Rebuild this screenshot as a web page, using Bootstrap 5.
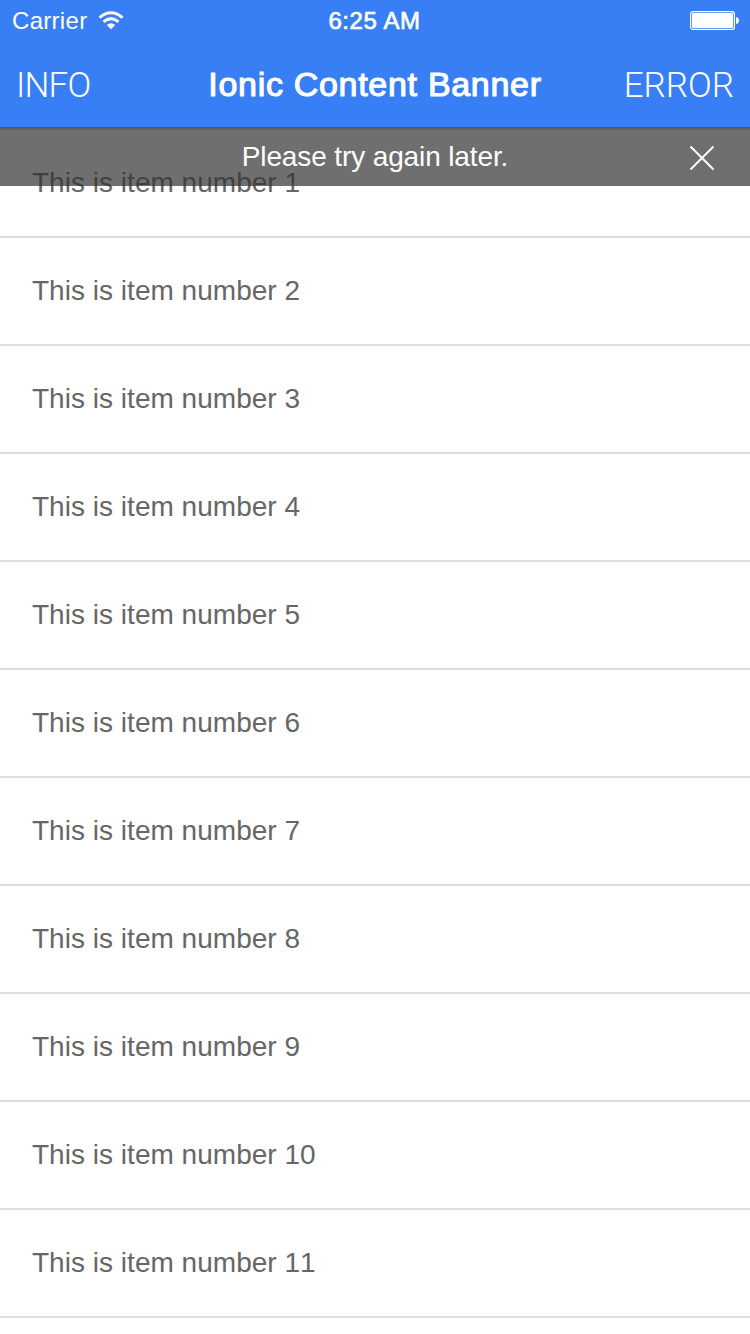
<!DOCTYPE html>
<html lang="en">
<head>
<meta charset="utf-8">
<meta name="viewport" content="width=device-width, initial-scale=1">
<title>Ionic Content Banner</title>
<link href="https://cdn.jsdelivr.net/npm/bootstrap@5.3.0/dist/css/bootstrap.min.css" rel="stylesheet">
<style>
  body { font-family: "Liberation Sans", Arial, sans-serif; height: 1334px; color: #666; }
  .app-header { background: #387ef5; height: 128px; border-bottom: 1px solid #0c60ee; }
  .status-bar { height: 41px; padding: 0 10px 0 12px; font-size: 24px; line-height: 42px; }
  .status-bar .carrier { letter-spacing: .3px; }
  .status-bar .clock { letter-spacing: .6px; margin-right: 3px; -webkit-text-stroke: .7px #fff; }
  .title-bar { height: 86px; padding: 0 16px; line-height: 86px; }
  .title-bar h1 { font-size: 34px; line-height: inherit; font-weight: 400; letter-spacing: .7px; -webkit-text-stroke: 1.1px #fff; }
  .thin-btn { font-family: Roboto, "Liberation Sans", sans-serif; font-weight: 300; font-size: 35px; line-height: 89px; }
  .thin-btn.at-start { letter-spacing: -.8px; }
  .side { flex: 1 1 0; }
  .content-banner { top: 128px; height: 58px; background: rgba(50,50,50,.7); border-top: 2px solid rgba(50,50,50,.18); font-size: 28px; line-height: 54px; }
  .banner-text { letter-spacing: -.12px; }
  .item-list { --bs-list-group-color: #666; --bs-list-group-border-color: #ddd; font-size: 28px; font-kerning: none; letter-spacing: .02px; }
  .item-list .list-group-item { height: 108px; padding: 0 32px; line-height: 106px; border-width: 0 0 2px; }
  .item-list .list-group-item:first-child { height: 110px; padding-top: 2px; }
  .close-btn { right: 35px; top: 15px; line-height: 0; }
</style>
</head>
<body class="overflow-hidden bg-white">
<header class="app-header text-white">
  <div class="status-bar d-flex">
    <div class="side d-flex align-items-center">
      <span class="carrier">Carrier</span>
      <svg class="ms-2" width="30" height="20" viewBox="-1 .7 29 20" fill="none" stroke="#fff" stroke-width="3"><path d="M3 7.300Q14.500-2.500 26 7.300M7 11.500Q14.500 5.200 22 11.500"/><path d="M10.300 14.700Q14.500 11.300 18.700 14.700L14.500 19Z" fill="#fff" stroke="none"/></svg>
    </div>
    <span class="clock">6:25 AM</span>
    <div class="side d-flex justify-content-end align-items-center">
      <svg width="50" height="20" viewBox="0 0 50 20"><rect x=".6" y=".6" width="43.800" height="17.800" rx="2.500" fill="none" stroke="#fff" stroke-width="1.200"/><rect x="2" y="2" width="41" height="15" rx="1.200" fill="#fff"/><path d="M46 6q3 .5 3 3.500t-3 3.500z" fill="#fff"/></svg>
    </div>
  </div>
  <nav class="title-bar d-flex">
    <div class="side"><a class="thin-btn at-start text-white text-decoration-none" href="#">INFO</a></div>
    <h1 class="m-0 text-nowrap">Ionic Content Banner</h1>
    <div class="side text-end"><a class="thin-btn text-white text-decoration-none" href="#">ERROR</a></div>
  </nav>
</header>
<div class="content-banner position-absolute start-0 w-100 z-3 text-white text-center">
  <span class="banner-text">Please try again later.</span>
  <button class="close-btn position-absolute btn p-0 border-0" aria-label="Close"><svg width="26" height="26" viewBox="0 0 26 26" stroke="#fff" stroke-width="2"><path d="M1.500 1.500l23 23M24.500 1.500l-23 23"/></svg></button>
</div>
<ul class="item-list list-group list-group-flush">
  <li class="list-group-item">This is item number 1</li>
  <li class="list-group-item">This is item number 2</li>
  <li class="list-group-item">This is item number 3</li>
  <li class="list-group-item">This is item number 4</li>
  <li class="list-group-item">This is item number 5</li>
  <li class="list-group-item">This is item number 6</li>
  <li class="list-group-item">This is item number 7</li>
  <li class="list-group-item">This is item number 8</li>
  <li class="list-group-item">This is item number 9</li>
  <li class="list-group-item">This is item number 10</li>
  <li class="list-group-item border-bottom border-2">This is item number 11</li>
</ul>
</body>
</html>
